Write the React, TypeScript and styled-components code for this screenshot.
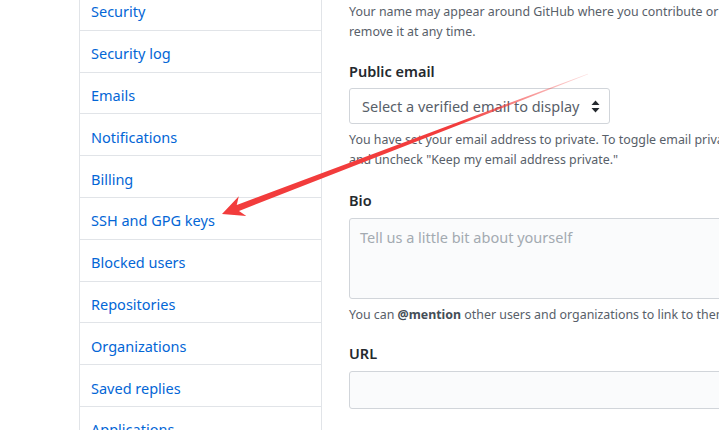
import React from "react";
import styled, { createGlobalStyle } from "styled-components";

const Global = createGlobalStyle`
  html, body { margin: 0; padding: 0; background: #fff; }
  body { font-family: "Noto Sans", "Open Sans", sans-serif; color: #24292e; }
  * { box-sizing: border-box; }
`;

const Page = styled.div`
  position: relative;
  width: 719px;
  height: 430px;
  overflow: hidden;
  display: flex;
  align-items: flex-start;
  gap: 27px;
  padding-left: 79px;
`;

const Menu = styled.nav`
  flex: 0 0 243px;
  margin-top: -12px;
  border: 1px solid #e1e4e8;
  border-radius: 3px;
  display: flex;
  flex-direction: column;
`;

const MenuItem = styled.a`
  display: flex;
  align-items: center;
  height: 41.8px;
  padding: 4px 11px 0;
  border-bottom: 1px solid #e1e4e8;
  color: #0366d6;
  font-size: 14.5px;
  text-decoration: none;
  white-space: nowrap;
`;

const Content = styled.div`
  flex: 0 0 420px;
  padding-top: 2px;
  display: flex;
  flex-direction: column;
`;

const Note = styled.p<{ $mt?: number }>`
  margin: ${(p) => p.$mt ?? 0}px 0 0;
  font-size: 12.4px;
  line-height: 20px;
  color: #586069;
  white-space: nowrap;
  b { color: #444d56; font-weight: 700; }
`;

const Label = styled.label<{ $mt: number }>`
  display: block;
  margin-top: ${(p) => p.$mt}px;
  font-size: 14.5px;
  line-height: 22px;
  font-weight: 600;
  color: #24292e;
`;

const SelectBox = styled.div`
  margin-top: 6px;
  width: 261px;
  height: 36px;
  border: 1px solid #d1d5da;
  border-radius: 3px;
  background: #fff;
  display: flex;
  align-items: center;
  justify-content: space-between;
  padding: 0 9px 0 12px;
  font-size: 14.5px;
  color: #586069;
  white-space: nowrap;
`;

const Field = styled.div<{ $h: number }>`
  margin-top: 7px;
  width: 420px;
  height: ${(p) => p.$h}px;
  border: 1px solid #d1d5da;
  border-radius: 3px;
  background: #fafbfc;
  padding: 7px 10px;
  font-size: 14.5px;
  line-height: 22px;
  color: #a3aab1;
  white-space: nowrap;
`;

const ArrowOverlay = styled.svg`
  position: absolute;
  left: 0;
  top: 0;
  pointer-events: none;
`;

const items = [
  "Security",
  "Security log",
  "Emails",
  "Notifications",
  "Billing",
  "SSH and GPG keys",
  "Blocked users",
  "Repositories",
  "Organizations",
  "Saved replies",
  "Applications",
];

function UpDown() {
  return (
    <svg width="9" height="13" viewBox="0 0 9 13">
      <path d="M4.5 0.5 L8.5 5 H0.5 Z" fill="#24292e" />
      <path d="M4.5 12.5 L8.5 8 H0.5 Z" fill="#24292e" />
    </svg>
  );
}

function Arrow() {
  const tip = [222, 214];
  const tail = [588, 74];
  const dx = tail[0] - tip[0];
  const dy = tail[1] - tip[1];
  const len = Math.hypot(dx, dy);
  const u = [dx / len, dy / len];
  const n = [-u[1], u[0]];
  const at = (d: number, w: number) => [
    tip[0] + u[0] * d + n[0] * w,
    tip[1] + u[1] * d + n[1] * w,
  ];
  const pts = [
    at(0, 0),
    at(22, 10.5),
    at(17, 3.2),
    at(len, 0.4),
    at(len, -0.4),
    at(17, -3.2),
    at(22, -10.5),
  ];
  return (
    <ArrowOverlay width="719" height="430" viewBox="0 0 719 430">
      <defs>
        <linearGradient id="fade" gradientUnits="userSpaceOnUse" x1={tail[0]} y1={tail[1]} x2={tip[0]} y2={tip[1]}>
          <stop offset="0" stopColor="#f23c3c" stopOpacity="0.15" />
          <stop offset="0.35" stopColor="#f23c3c" stopOpacity="1" />
          <stop offset="1" stopColor="#f23c3c" stopOpacity="1" />
        </linearGradient>
      </defs>
      <polygon points={pts.map((p) => p.join(",")).join(" ")} fill="url(#fade)" />
    </ArrowOverlay>
  );
}

export default function App() {
  return (
    <>
      <Global />
      <Page>
        <Menu>
          {items.map((t) => (
            <MenuItem key={t} href="#">
              {t}
            </MenuItem>
          ))}
        </Menu>
        <Content>
          <Note>
            Your name may appear around GitHub where you contribute or
            <br />
            remove it at any time.
          </Note>
          <Label $mt={18}>Public email</Label>
          <SelectBox>
            <span>Select a verified email to display</span>
            <UpDown />
          </SelectBox>
          <Note $mt={6}>
            You have set your email address to private. To toggle email privacy, go to email settings
            <br />
            and uncheck "Keep my email address private."
          </Note>
          <Label $mt={19}>Bio</Label>
          <Field $h={81}>Tell us a little bit about yourself</Field>
          <Note $mt={6}>
            You can <b>@mention</b> other users and organizations to link to them.
          </Note>
          <Label $mt={17}>URL</Label>
          <Field $h={38} />
        </Content>
        <Arrow />
      </Page>
    </>
  );
}
